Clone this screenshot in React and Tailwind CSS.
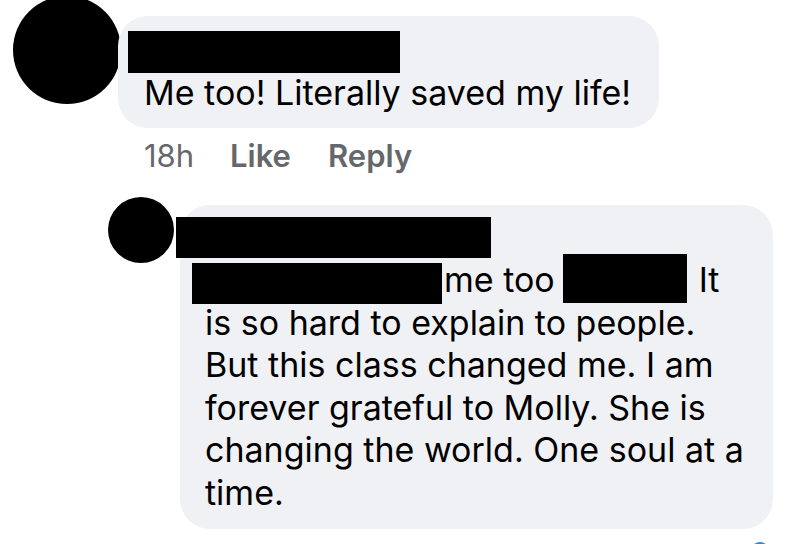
export default function App() {
  const font = { fontFamily: 'Inter, "Noto Sans", sans-serif' };
  return (
    <div className="relative w-[800px] h-[544px] overflow-hidden bg-white text-black" style={font}>
      {/* Comment 1 */}
      <div className="flex items-start pl-[13px]">
        <div className="w-[108px] h-[108px] shrink-0 rounded-full bg-black -mt-[4px]" />
        <div className="-ml-[3px] mt-[16px] w-[541px] h-[112px] rounded-[30px] bg-[#f0f1f5] pl-[10px] pt-[15px]">
          <div className="w-[272px] h-[42px] bg-black" />
          <div className="pl-[16px] text-[34px] leading-[40px] whitespace-nowrap">
            Me too! Literally saved my life!
          </div>
        </div>
      </div>
      <div className="flex items-baseline pl-[144px] mt-[11px] text-[31px] leading-[34px] text-[#65676b]">
        <span className="w-[86px] font-normal">18h</span>
        <span className="w-[98px] font-semibold">Like</span>
        <span className="font-semibold">Reply</span>
      </div>

      {/* Comment 2 */}
      <div className="flex items-start pl-[108px] mt-[24px]">
        <div className="relative z-10 w-[66px] h-[66px] shrink-0 rounded-full bg-black" />
        <div className="ml-[6px] mt-[8px] w-[593px] h-[324px] rounded-[30px] bg-[#f0f1f5] pt-[12px]">
          <div className="-ml-[4px] w-[315px] h-[41px] bg-black" />
          <div className="pl-[25px] pt-[1px] text-[34px] leading-[42.5px] whitespace-nowrap">
            <div className="flex items-start h-[42.5px]">
              <span className="shrink-0 -ml-[13px] mt-[4px] w-[250px] h-[41px] bg-black" />
              <span className="ml-[2px]">me too</span>
              <span className="shrink-0 ml-[8px] -mt-[5px] w-[124px] h-[49px] bg-black" />
              <span className="ml-[12px]">It</span>
            </div>
            <div>is so hard to explain to people.</div>
            <div>But this class changed me. I am</div>
            <div>forever grateful to Molly. She is</div>
            <div>changing the world. One soul at a</div>
            <div>time.</div>
          </div>
        </div>
      </div>

      {/* partial reaction icon at bottom */}
      <div className="absolute left-[751px] top-[542px] w-[18px] h-[18px] rounded-full bg-[#1d8df2]" />
    </div>
  );
}
